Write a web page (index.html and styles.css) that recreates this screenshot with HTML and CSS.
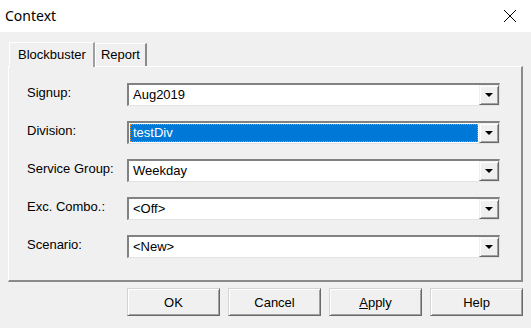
FILE: index.html
```html
<!DOCTYPE html>
<html lang="en">
<head>
    <meta charset="UTF-8">
    <title>Context</title>
    <link rel="stylesheet" href="styles.css">
</head>
<body>
    <div class="titlebar">
        <span class="title">Context</span>
        <svg class="close" width="14" height="14" viewBox="0 0 14 14">
            <path d="M1 1 L13 13 M13 1 L1 13" stroke="#000" stroke-width="1" fill="none"/>
        </svg>
    </div>

    <div class="dialog">
        <div class="tabs">
            <div class="tab active">Blockbuster</div>
            <div class="tab">Report</div>
        </div>
        <div class="panel">
            <div class="row">
                <label>Signup:</label>
                <div class="combo"><span class="value">Aug2019</span><span class="drop"></span></div>
            </div>
            <div class="row">
                <label>Division:</label>
                <div class="combo"><span class="value selected">testDiv</span><span class="drop"></span></div>
            </div>
            <div class="row">
                <label>Service Group:</label>
                <div class="combo"><span class="value">Weekday</span><span class="drop"></span></div>
            </div>
            <div class="row">
                <label>Exc. Combo.:</label>
                <div class="combo"><span class="value">&lt;Off&gt;</span><span class="drop"></span></div>
            </div>
            <div class="row">
                <label>Scenario:</label>
                <div class="combo"><span class="value">&lt;New&gt;</span><span class="drop"></span></div>
            </div>
        </div>
        <div class="buttons">
            <button>OK</button>
            <button>Cancel</button>
            <button><u>A</u>pply</button>
            <button>Help</button>
        </div>
    </div>
</body>
</html>
```

FILE: styles.css
```css
body {
    margin: 0;
    background: #f0f0f0;
    font-family: "Liberation Sans", Arial, sans-serif;
    font-size: 13px;
    color: #000;
    overflow: hidden;
}
.titlebar {
    height: 32px;
    background: #fff;
    display: flex;
    align-items: center;
    justify-content: space-between;
    padding: 0 14px 0 5px;
}
.title {
    font-family: "Noto Sans", sans-serif;
    font-size: 14px;
    margin-top: -1px;
}
.dialog {
    margin: 0 8px;
}
.tabs {
    display: flex;
    align-items: flex-end;
    height: 34px;
    padding-left: 1px;
}
.tab {
    height: 22px;
    padding: 0 5px;
    line-height: 22px;
    background: #f0f0f0;
    border-top: 1px solid #fff;
    border-left: 1px solid #fff;
    border-right: 2px solid #8a8a8a;
}
.tab.active {
    height: 24px;
    line-height: 23px;
    padding: 0 7px 0 8px;
    border-right: 2px solid #a0a0a0;
    position: relative;
    z-index: 1;
    margin-bottom: -1px;
}
.panel {
    border-top: 1px solid #fff;
    border-left: 1px solid #fff;
    border-right: 2px solid #8a8a8a;
    border-bottom: 2px solid #8a8a8a;
    height: 216px;
    box-sizing: border-box;
    padding: 16px 0 0 18px;
    display: flex;
    flex-direction: column;
    gap: 15px;
}
.row {
    display: flex;
    align-items: center;
    height: 23px;
}
.row label {
    width: 100px;
    margin-top: -4px;
}
.combo {
    width: 373px;
    height: 23px;
    box-sizing: border-box;
    background: #fff;
    border-top: 2px solid #828282;
    border-left: 2px solid #828282;
    border-right: 1px solid #e3e3e3;
    border-bottom: 1px solid #e3e3e3;
    display: flex;
    align-items: stretch;
    padding: 1px 0 1px 1px;
}
.value {
    flex: 1;
    padding-left: 3px;
    line-height: 18px;
}
.value.selected {
    background: #0078d7;
    color: #fff;
    outline: 1px dotted #e08a2c;
    outline-offset: -1px;
}
.drop {
    width: 18px;
    margin-left: 1px;
    background: #f0f0f0;
    border-top: 1px solid #f0f0f0;
    border-left: 1px solid #f0f0f0;
    border-right: 1px solid #696969;
    border-bottom: 1px solid #696969;
    box-shadow: inset 1px 1px #fff, inset -1px -1px #a0a0a0;
    position: relative;
    margin-top: -1px;
    margin-bottom: -1px;
}
.drop::after {
    content: "";
    position: absolute;
    left: 5px;
    top: 7px;
    border-left: 4px solid transparent;
    border-right: 4px solid transparent;
    border-top: 4px solid #000;
}
.buttons {
    display: flex;
    justify-content: flex-end;
    gap: 8px;
    margin-top: 6px;
}
.buttons button {
    width: 93px;
    height: 28px;
    font-family: "Liberation Sans", Arial, sans-serif;
    font-size: 13px;
    background: #f0f0f0;
    border-top: 1px solid #d4d4d4;
    border-left: 1px solid #d4d4d4;
    border-right: 1px solid #696969;
    border-bottom: 1px solid #696969;
    box-shadow: inset 1px 1px #fff, inset -1px -1px #a0a0a0;
    padding: 0;
    color: #000;
}
```
